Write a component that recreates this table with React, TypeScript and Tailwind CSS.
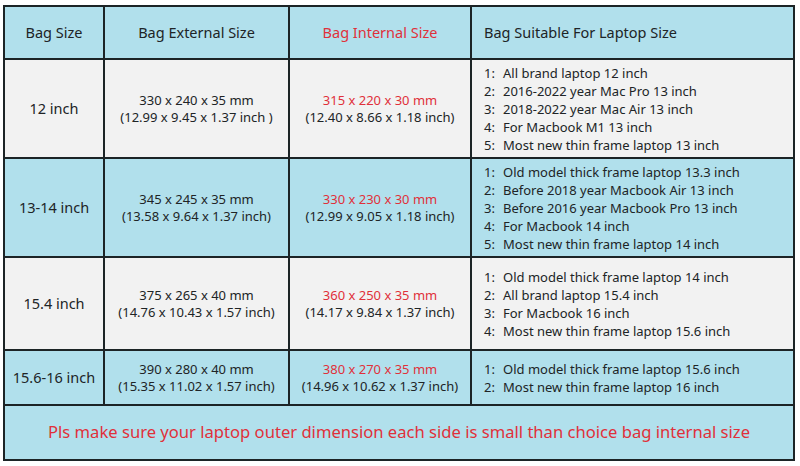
import React from "react";

const rows = [
  {
    size: "12 inch",
    ext: ["330 x 240 x 35 mm", "(12.99 x 9.45 x 1.37 inch )"],
    int: ["315 x 220 x 30 mm", "(12.40 x 8.66 x 1.18 inch)"],
    list: [
      "All brand laptop 12 inch",
      "2016-2022 year Mac Pro 13 inch",
      "2018-2022 year Mac Air 13 inch",
      "For Macbook M1 13 inch",
      "Most new thin frame laptop 13 inch",
    ],
    blue: false,
    h: "h-[97px]",
  },
  {
    size: "13-14 inch",
    ext: ["345 x 245 x 35 mm", "(13.58 x 9.64 x 1.37 inch)"],
    int: ["330 x 230 x 30 mm", "(12.99 x 9.05 x 1.18 inch)"],
    list: [
      "Old model thick frame laptop 13.3 inch",
      "Before 2018 year Macbook Air 13 inch",
      "Before 2016 year Macbook Pro 13 inch",
      "For Macbook 14 inch",
      "Most new thin frame laptop 14 inch",
    ],
    blue: true,
    h: "h-[97px]",
  },
  {
    size: "15.4 inch",
    ext: ["375 x 265 x 40 mm", "(14.76 x 10.43 x 1.57 inch)"],
    int: ["360 x 250 x 35 mm", "(14.17 x 9.84 x 1.37 inch)"],
    list: [
      "Old model thick frame laptop 14 inch",
      "All brand laptop 15.4 inch",
      "For Macbook 16 inch",
      "Most new thin frame laptop 15.6 inch",
    ],
    blue: false,
    h: "h-[91px]",
  },
  {
    size: "15.6-16 inch",
    ext: ["390 x 280 x 40 mm", "(15.35 x 11.02 x 1.57 inch)"],
    int: ["380 x 270 x 35 mm", "(14.96 x 10.62 x 1.37 inch)"],
    list: ["Old model thick frame laptop 15.6 inch", "Most new thin frame laptop 16 inch"],
    blue: true,
    h: "h-[53px]",
  },
];

export default function App() {
  return (
    <div className="w-[800px] h-[466px] bg-white pt-[5px] pl-[3px] text-[#202426]" style={{ fontFamily: '"Noto Sans", "Open Sans", sans-serif' }}>
      <div className="w-[792px] bg-[#1c2426] p-[2px] grid grid-cols-[98px_183px_180px_321px] gap-[2px]">
        <div className="h-[51px] bg-[#b1e0ec] flex items-center justify-center text-[14.5px]">Bag Size</div>
        <div className="h-[51px] bg-[#b1e0ec] flex items-center justify-center text-[14.5px]">Bag External Size</div>
        <div className="h-[51px] bg-[#b1e0ec] flex items-center justify-center text-[14.5px] text-[#e0303a]">Bag Internal Size</div>
        <div className="h-[51px] bg-[#b1e0ec] flex items-center pl-[12px] text-[14.5px]">Bag Suitable For Laptop Size</div>
        {rows.map((r) => {
          const bg = r.blue ? "bg-[#b1e0ec]" : "bg-[#f2f2f2]";
          return (
            <React.Fragment key={r.size}>
              <div className={`${r.h} ${bg} flex items-center justify-center text-[14.5px]`}>{r.size}</div>
              <div className={`${r.h} ${bg} flex flex-col items-center justify-center text-[13px] leading-[17px]`}>
                <div>{r.ext[0]}</div>
                <div>{r.ext[1]}</div>
              </div>
              <div className={`${r.h} ${bg} flex flex-col items-center justify-center text-[13px] leading-[17px]`}>
                <div className="text-[#e0303a]">{r.int[0]}</div>
                <div>{r.int[1]}</div>
              </div>
              <div className={`${r.h} ${bg} flex flex-col justify-center pl-[12px] text-[13px] leading-[18px]`}>
                {r.list.map((t, i) => (
                  <div key={i} className="flex">
                    <span className="w-[19px]">{i + 1}:</span>
                    <span>{t}</span>
                  </div>
                ))}
              </div>
            </React.Fragment>
          );
        })}
        <div className="col-span-4 h-[53px] bg-[#b1e0ec] flex items-center justify-center text-[16.6px] text-[#e0303a]">
          Pls make sure your laptop outer dimension each side is small than choice bag internal size
        </div>
      </div>
    </div>
  );
}
